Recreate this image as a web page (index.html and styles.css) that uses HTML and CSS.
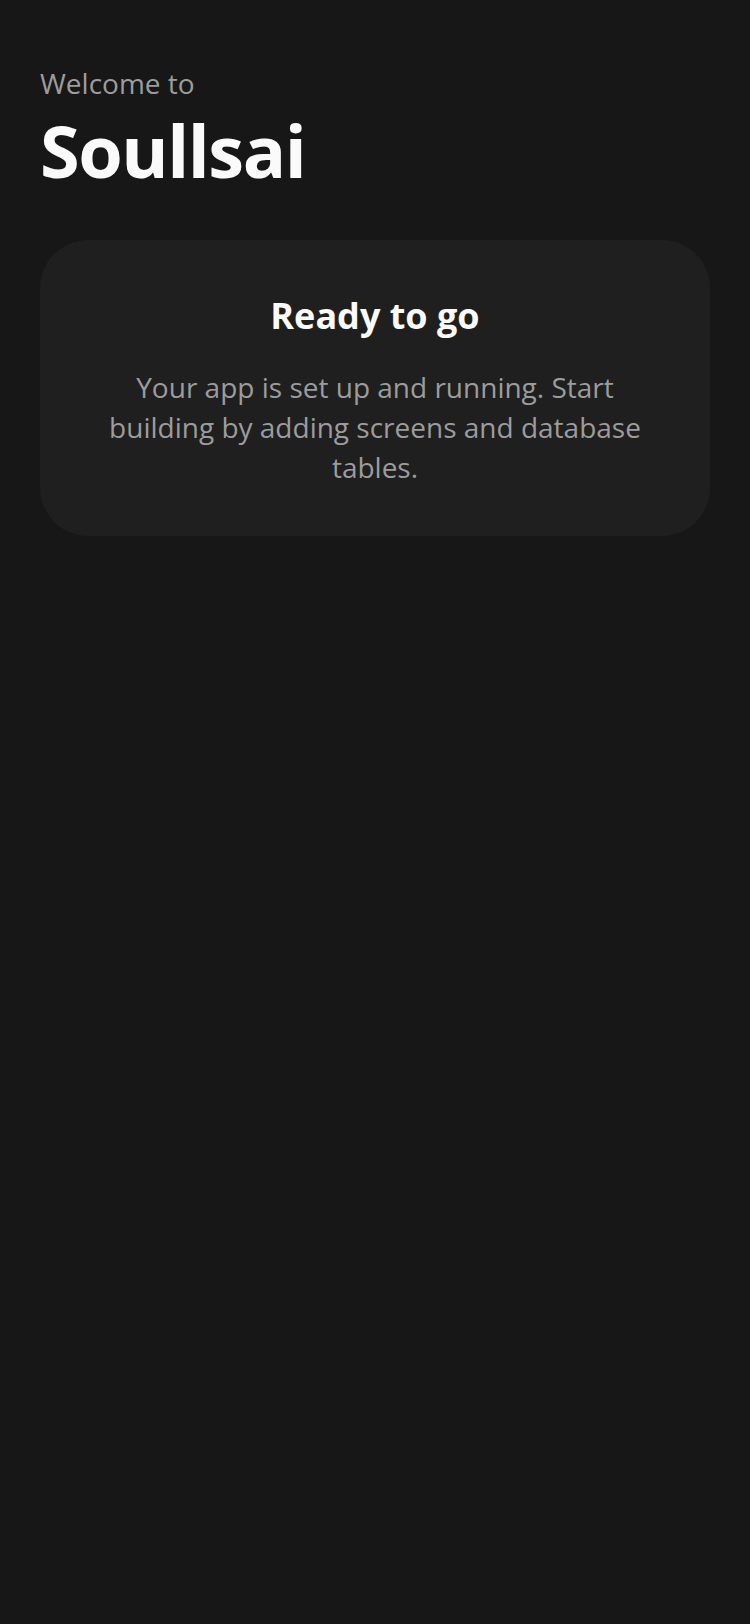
FILE: index.html
```html
<!DOCTYPE html>
<html lang="en">
<head>
<meta charset="utf-8">
<meta name="viewport" content="width=750">
<title>Soullsai</title>
<link rel="stylesheet" href="styles.css">
</head>
<body>
<main class="screen">
  <header class="hero">
    <p class="hero-eyebrow">Welcome to</p>
    <h1 class="hero-title">Soullsai</h1>
  </header>
  <section class="card">
    <h2 class="card-title">Ready to go</h2>
    <p class="card-text">Your app is set up and running. Start building by adding screens and database tables.</p>
  </section>
</main>
</body>
</html>
```

FILE: styles.css
```css
html, body {
  margin: 0;
  padding: 0;
  background: #171717;
}
body {
  font-family: "Open Sans", "Noto Sans", sans-serif;
  min-height: 1624px;
}
.screen {
  padding: 65px 40px 0;
  display: flex;
  flex-direction: column;
}
.hero {
  display: flex;
  flex-direction: column;
  gap: 9px;
}
.hero-eyebrow {
  margin: 0;
  font-size: 28px;
  line-height: 36px;
  color: #9c9c9c;
}
.hero-title {
  margin: 0;
  font-size: 72px;
  line-height: 80px;
  font-weight: 700;
  color: #fafafa;
  letter-spacing: -1.44px;
}
.card {
  margin-top: 50px;
  background: #1f1f1f;
  border-radius: 48px;
  padding: 54px 48px 49px;
  display: flex;
  flex-direction: column;
  align-items: center;
  gap: 29px;
  text-align: center;
}
.card-title {
  margin: 0;
  font-size: 36px;
  line-height: 44px;
  font-weight: 700;
  color: #fafafa;
}
.card-text {
  margin: 0;
  font-size: 28px;
  line-height: 40px;
  color: #9c9c9c;
}
```
